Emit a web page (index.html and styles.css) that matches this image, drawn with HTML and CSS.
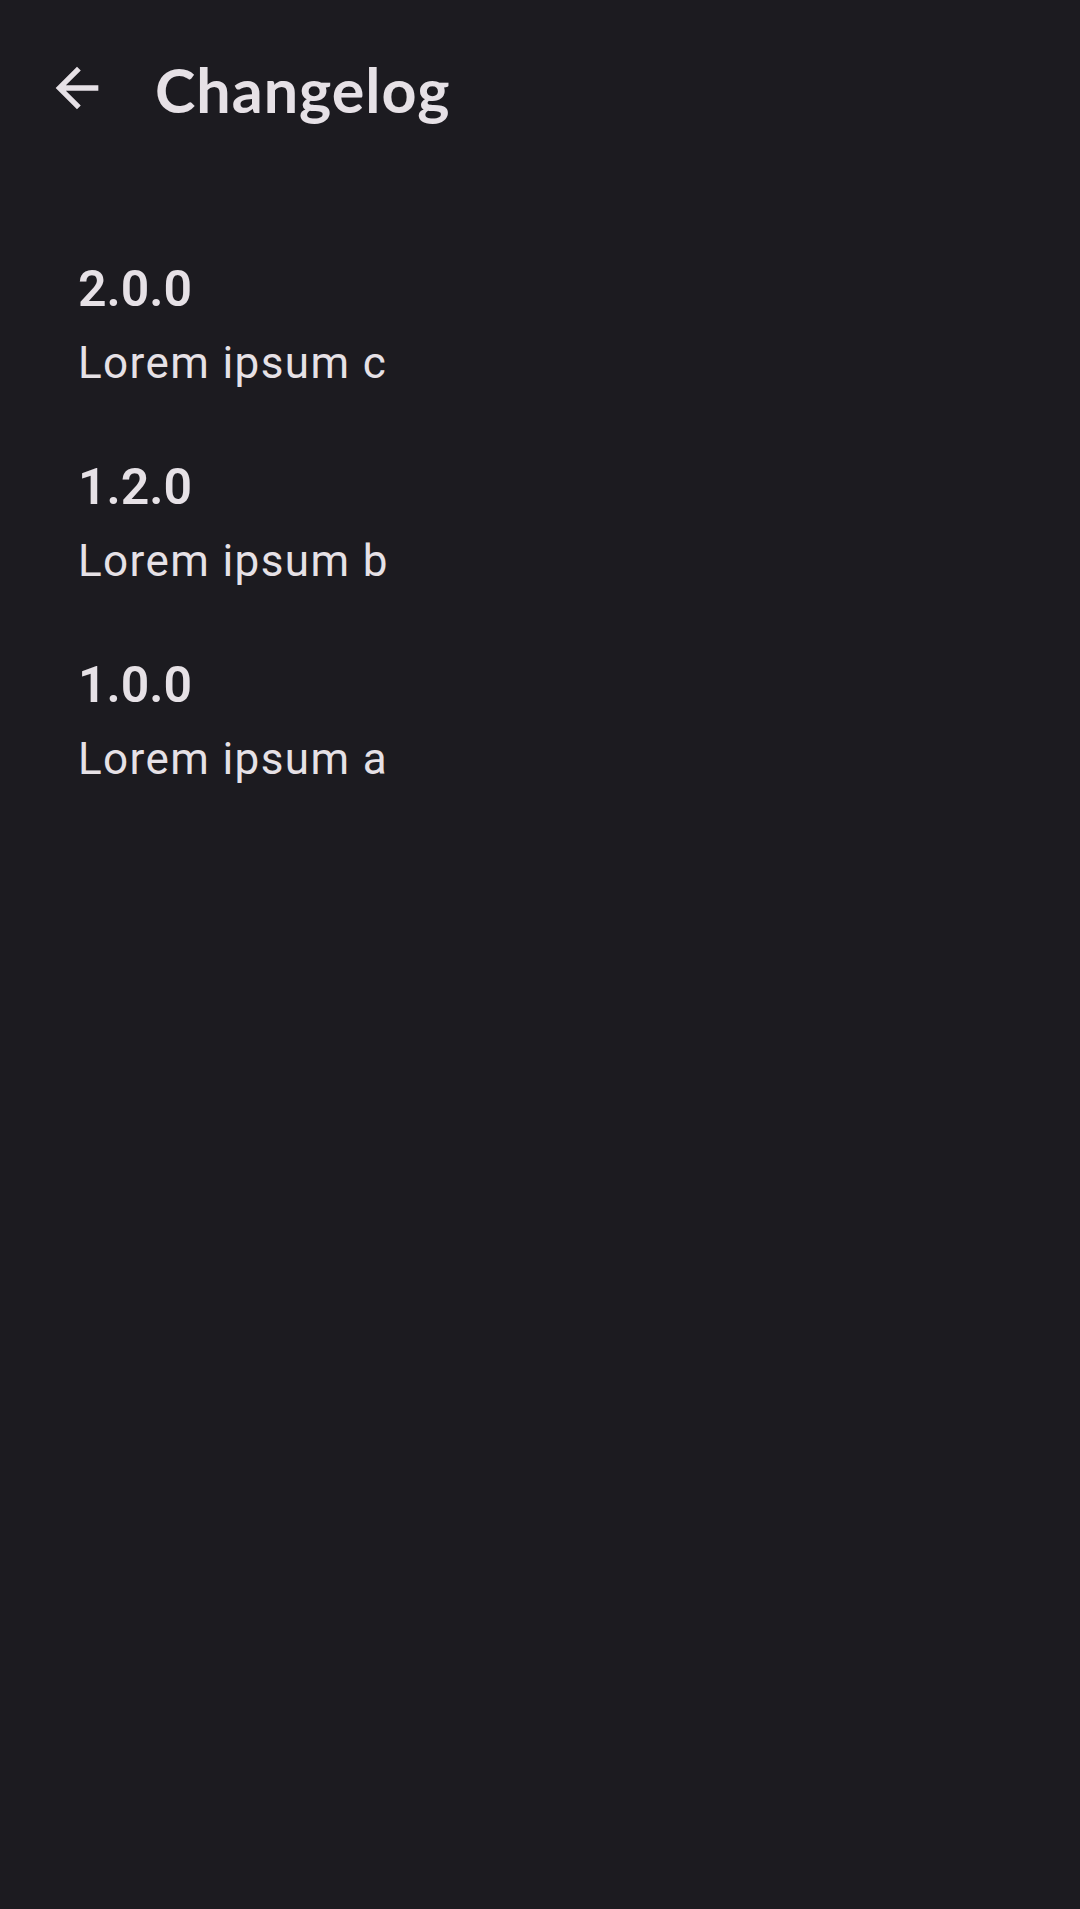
FILE: index.html
```html
<!DOCTYPE html>
<html lang="en">
<head>
<meta charset="utf-8">
<title>Changelog</title>
<link rel="stylesheet" href="styles.css">
</head>
<body>
<div class="screen">
  <header class="topbar">
    <button class="back" aria-label="Back">
      <svg viewBox="0 0 24 24" width="64" height="64"><path d="M20 11H7.83l5.59-5.59L12 4l-8 8 8 8 1.41-1.41L7.83 13H20v-2z" fill="currentColor"/></svg>
    </button>
    <h1 class="title">Changelog</h1>
  </header>
  <main class="list">
    <section class="entry">
      <h2 class="version">2.0.0</h2>
      <p class="notes">Lorem ipsum c</p>
    </section>
    <section class="entry">
      <h2 class="version">1.2.0</h2>
      <p class="notes">Lorem ipsum b</p>
    </section>
    <section class="entry">
      <h2 class="version">1.0.0</h2>
      <p class="notes">Lorem ipsum a</p>
    </section>
  </main>
</div>
</body>
</html>
```
FILE: styles.css
```css
html, body {
  margin: 0;
  padding: 0;
  background: #1c1b20;
}
.screen {
  width: 1080px;
  min-height: 1909px;
  background: #1c1b20;
  color: #e6e1e6;
  font-family: Roboto, "Noto Sans", sans-serif;
}
.topbar {
  height: 176px;
  display: flex;
  align-items: center;
  padding-left: 45px;
}
.back {
  width: 64px;
  height: 64px;
  padding: 0;
  border: 0;
  background: none;
  color: #e6e1e6;
  display: flex;
}
.title {
  margin: 4px 0 0 46px;
  font-family: Lato, "Open Sans", sans-serif;
  font-weight: 700;
  font-size: 61px;
  line-height: 72px;
  letter-spacing: 1px;
}
.list {
  padding: 83px 0 0 78px;
  display: flex;
  flex-direction: column;
  gap: 68px;
}
.entry {
  display: flex;
  flex-direction: column;
  gap: 18px;
}
.version {
  margin: 0;
  font-size: 50px;
  line-height: 60px;
  font-weight: 600;
}
.notes {
  margin: 0;
  font-size: 44px;
  line-height: 52px;
  letter-spacing: 1.4px;
}
```
